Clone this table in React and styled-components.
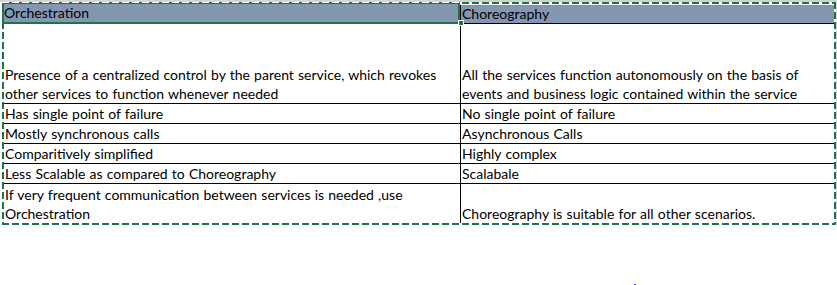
import React from 'react'
import styled, { createGlobalStyle } from 'styled-components'

const GlobalStyle = createGlobalStyle`
    html, body {
        margin: 0;
        padding: 0;
        background: #ffffff;
    }
    body {
        font-family: Lato, Carlito, "Open Sans", sans-serif;
        font-size: 14px;
        word-spacing: 0.6px;
        color: #000000;
    }
`;

const rows = [
    {
        left: ['Presence of a centralized control by the parent service, which revokes', 'other services to function whenever needed'],
        right: ['All the services function autonomously on the basis of', 'events and business logic contained within the service'],
        height: 79,
    },
    { left: ['Has single point of failure'], right: ['No single point of failure'], height: 19 },
    { left: ['Mostly synchronous calls'], right: ['Asynchronous Calls'], height: 19 },
    { left: ['Comparitively simplified'], right: ['Highly complex'], height: 19 },
    { left: ['Less Scalable as compared to Choreography'], right: ['Scalabale'], height: 19 },
    {
        left: ['If very frequent communication between services is needed ,use', 'Orchestration'],
        right: ['Choreography is suitable for all other scenarios.'],
        height: 39,
        last: true,
    },
]

const green = '#217346'

const dashes = (dir, color) =>
    `repeating-linear-gradient(${dir}, ${color} 0 7px, transparent 7px 10px)`

function App() {
    return (
        <Page>
            <GlobalStyle />
            <TopLine />
            <Selection>
                <Grid>
                    <HeaderCell $active>Orchestration</HeaderCell>
                    <HeaderCell>Choreography</HeaderCell>
                    {rows.map((row, i) => (
                        <React.Fragment key={i}>
                            <Cell $h={row.height} $last={row.last}>
                                {row.left.map((line) => <Line key={line}>{line}</Line>)}
                            </Cell>
                            <Cell $h={row.height} $last={row.last} $right>
                                {row.right.map((line) => <Line key={line}>{line}</Line>)}
                            </Cell>
                        </React.Fragment>
                    ))}
                </Grid>
                <FillHandle />
            </Selection>
            <Dot />
        </Page>
    )
}

const Page = styled.div`
    position: relative;
    width: 837px;
    height: 285px;
    overflow: hidden;
    &::after {
        content: "";
        position: absolute;
        right: 0;
        top: 0;
        width: 1px;
        height: 224px;
        background: #d4d4d4;
    }
`;

const TopLine = styled.div`
    height: 2px;
    background: #d4d4d4;
`;

const Selection = styled.div`
    position: relative;
    margin-left: 2px;
    width: 834px;
    box-sizing: border-box;
    padding: 3px 2px 2px 2px;
    background:
        ${dashes('90deg', green)} left top / 100% 2px no-repeat,
        ${dashes('90deg', green)} left bottom / 100% 2px no-repeat,
        ${dashes('180deg', green)} left top / 2px 100% no-repeat,
        ${dashes('180deg', green)} right top / 2px 100% no-repeat,
        #ffffff;
`;

const Grid = styled.div`
    display: grid;
    grid-template-columns: 456px 374px;
`;

const HeaderCell = styled.div`
    position: relative;
    height: 18px;
    line-height: 18px;
    background: #8497b0;
    padding-left: 1px;
    border-bottom: 1px solid #000000;
    border-left: 1px solid #000000;
    white-space: nowrap;
    ${({ $active }) => $active && `
        margin: -3px 0 0 -2px;
        padding-left: 0;
        border: 2px solid ${green};
        &::before {
            content: "";
            position: absolute;
            left: -2px;
            right: -2px;
            top: -2px;
            height: 1px;
            background: ${dashes('90deg', '#ffffff')};
        }
    `}
`;

const Cell = styled.div`
    height: ${({ $h }) => $h}px;
    display: flex;
    flex-direction: column;
    justify-content: flex-end;
    padding-left: 1px;
    border-bottom: ${({ $last }) => ($last ? 'none' : '1px solid #000000')};
    border-left: ${({ $right }) => ($right ? '1px solid #000000' : 'none')};
    white-space: nowrap;
    overflow: hidden;
`;

const Line = styled.div`
    height: 20px;
    line-height: 20px;
    margin-bottom: -1px;
`;

const FillHandle = styled.div`
    position: absolute;
    left: 456px;
    top: 18px;
    width: 4px;
    height: 4px;
    background: ${green};
    border: 1px solid #ffffff;
`;

const Dot = styled.div`
    position: absolute;
    left: 634px;
    top: 284px;
    width: 2px;
    height: 1px;
    background: #3344ff;
`;

export default App
